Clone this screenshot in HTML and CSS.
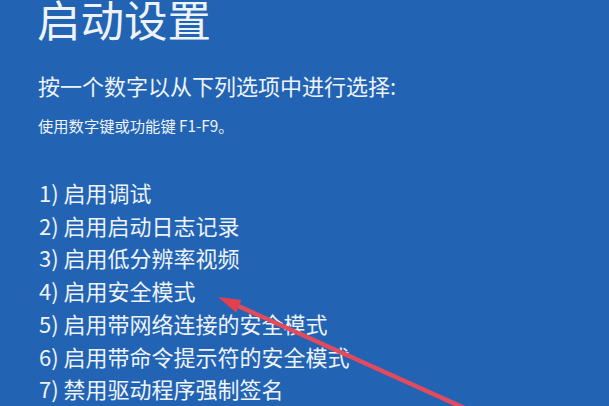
FILE: index.html
```html
<!DOCTYPE html>
<html lang="zh-CN">
<head>
<meta charset="utf-8">
<title>启动设置</title>
<link rel="stylesheet" href="styles.css">
</head>
<body>
<main class="screen">
  <h1 class="title">启动设置</h1>
  <p class="prompt">按一个数字以从下列选项中进行选择:</p>
  <p class="hint">使用数字键或功能键 F1-F9。</p>
  <ol class="options">
    <li>1) 启用调试</li>
    <li>2) 启用启动日志记录</li>
    <li>3) 启用低分辨率视频</li>
    <li>4) 启用安全模式</li>
    <li>5) 启用带网络连接的安全模式</li>
    <li>6) 启用带命令提示符的安全模式</li>
    <li>7) 禁用驱动程序强制签名</li>
  </ol>
  <svg class="arrow" width="609" height="406" viewBox="0 0 609 406" aria-hidden="true">
    <line x1="236" y1="305" x2="491" y2="420" stroke="#e24a5e" stroke-width="4.5" stroke-linecap="round"/>
    <polygon points="218,297 236,312.5 241.5,300" fill="#e2404f"/>
  </svg>
</main>
</body>
</html>
```

FILE: styles.css
```css
html, body {
  margin: 0;
  padding: 0;
  background: #2264b3;
}
.screen {
  position: relative;
  width: 609px;
  height: 406px;
  overflow: hidden;
  background: #2264b3;
  color: #eef3fa;
  font-family: "Noto Sans CJK SC", "Noto Sans", sans-serif;
  padding-left: 37px;
  box-sizing: border-box;
}
.title {
  margin: 0;
  font-size: 43.5px;
  font-weight: 400;
  line-height: 37px;
}
.prompt {
  margin: 36px 0 0 1px;
  font-size: 22px;
  font-weight: 400;
  line-height: 24px;
}
.hint {
  margin: 19px 0 0 1px;
  font-size: 15.3px;
  line-height: 18px;
}
.options {
  list-style: none;
  margin: 42px 0 0 2px;
  padding: 0;
  font-size: 22px;
  line-height: 32.7px;
}
.arrow {
  position: absolute;
  left: 0;
  top: 0;
}
```
